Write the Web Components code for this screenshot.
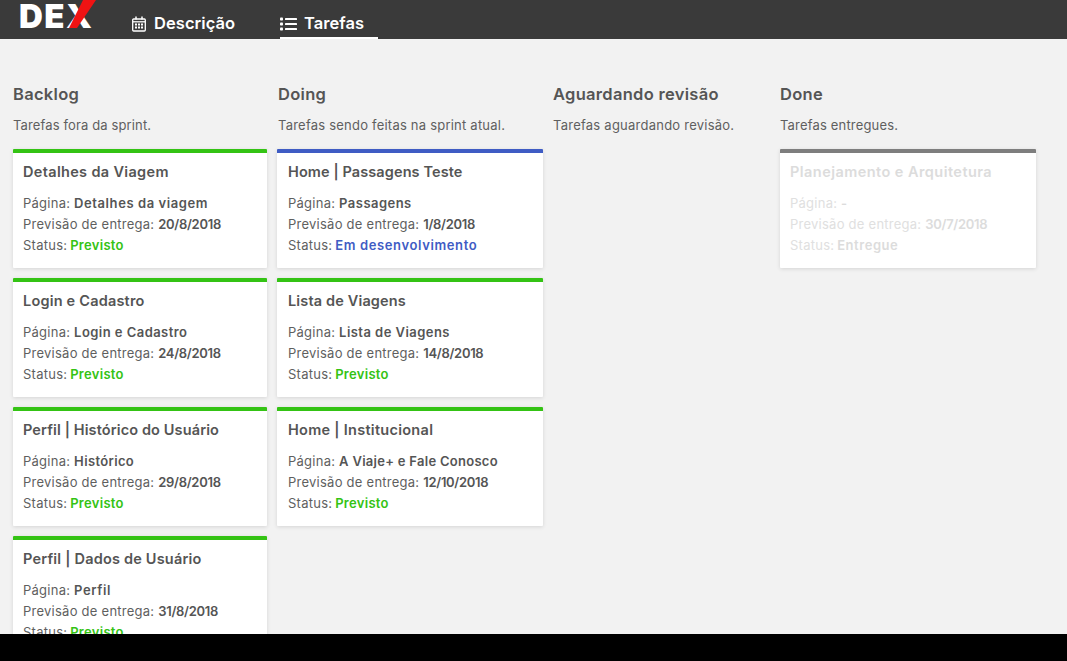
<!DOCTYPE html>
<html lang="pt-BR"><head><meta charset="utf-8"><title>Tarefas</title>
<style>
html,body{margin:0;height:661px;overflow:hidden;background:#000}
body{display:flex;flex-direction:column;font-family:Inter,"Liberation Sans",sans-serif;color:#555}
</style></head><body>
<dex-header>
  <dex-logo></dex-logo>
  <dex-tab icon="calendar" style="--w:124px;--g:8px">Descrição</dex-tab>
  <dex-tab icon="list" active style="--w:98px;--g:7px">Tarefas</dex-tab>
</dex-header>
<dex-board>
  <dex-column heading="Backlog" note="Tarefas fora da sprint." style="--w:254px;--nls:.13px">
    <dex-card title="Detalhes da Viagem" page="Detalhes da viagem" date="20/8/2018" status="Previsto" kind="planned" style="--tls:.33px;--pls:.58px"></dex-card>
    <dex-card title="Login e Cadastro" page="Login e Cadastro" date="24/8/2018" status="Previsto" kind="planned" style="--tls:.2px;--pls:.45px"></dex-card>
    <dex-card title="Perfil | Histórico do Usuário" page="Histórico" date="29/8/2018" status="Previsto" kind="planned" style="--tls:.12px;--pls:.36px"></dex-card>
    <dex-card title="Perfil | Dados de Usuário" page="Perfil" date="31/8/2018" status="Previsto" kind="planned" style="--tls:.2px;--pls:.58px"></dex-card>
  </dex-column>
  <dex-column heading="Doing" note="Tarefas sendo feitas na sprint atual." style="--w:266px;--inset:1px;--nls:.22px">
    <dex-card title="Home | Passagens Teste" page="Passagens" date="1/8/2018" status="Em desenvolvimento" kind="doing" style="--tls:.1px;--pls:.47px;--sls:.63px"></dex-card>
    <dex-card title="Lista de Viagens" page="Lista de Viagens" date="14/8/2018" status="Previsto" kind="planned" style="--tls:.15px;--pls:.45px"></dex-card>
    <dex-card title="Home | Institucional" page="A Viaje+ e Fale Conosco" date="12/10/2018" status="Previsto" kind="planned" style="--tls:.28px;--pls:.28px"></dex-card>
  </dex-column>
  <dex-column heading="Aguardando revisão" note="Tarefas aguardando revisão." style="--w:217px;--nls:.24px"></dex-column>
  <dex-column heading="Done" note="Tarefas entregues." style="--w:256px;--nls:.17px">
    <dex-card title="Planejamento e Arquitetura" page="-" date="30/7/2018" status="Entregue" kind="done" style="--tls:.45px;--sls:.55px"></dex-card>
  </dex-column>
</dex-board>
<dex-footer></dex-footer>
<script>
function def(name, css, html){
  customElements.define(name, class extends HTMLElement{
    connectedCallback(){
      if(this.shadowRoot) return;
      const r=this.attachShadow({mode:'open'});
      r.innerHTML='<style>'+css+'</style>'+(typeof html==='function'?html(this):html);
    }
  });
}
const esc=s=>(s||'').replace(/&/g,'&amp;').replace(/</g,'&lt;');
const ICONS={
 calendar:'<svg width="14" height="16" viewBox="0 0 14 16" fill="none" stroke="#fff"><path stroke-width="1.3" d="M1.6 3h10.8a.9.9 0 0 1 .9.9v10.2a.9.9 0 0 1-.9.9H1.6a.9.9 0 0 1-.9-.9V3.900a.9.9 0 0 1 .9-.9z"/><path stroke-width="1.5" d="M4 .5v3M10 .5v3"/><path stroke-width="1.3" d="M1 5.800h12"/><path stroke-width="1.8" stroke-dasharray="2 1" d="M3 8.500h8M3 11.500h8"/></svg>',
 list:'<svg width="17" height="14" viewBox="0 0 17 14" fill="#fff"><rect x="0" y="0.500" width="3" height="3" rx=".8"/><rect x="0" y="5.500" width="3" height="3" rx=".8"/><rect x="0" y="10.500" width="3" height="3" rx=".8"/><rect x="5" y="1" width="12" height="2" rx=".6"/><rect x="5" y="6" width="12" height="2" rx=".6"/><rect x="5" y="11" width="12" height="2" rx=".6"/></svg>'
};
def('dex-header',':host{display:flex;flex:none;height:39px;background:#3a3a3a;overflow:hidden}','<slot></slot>');
def('dex-logo',`:host{display:block;position:relative;flex:none;width:78px;height:39px;margin:0 35px 0 19px}
 span{display:block;font:900 33px/32px Inter,sans-serif;letter-spacing:1.5px;color:#fff;white-space:nowrap}
 svg{position:absolute;left:0;top:0}`,
 `<span>DEX</span><svg width="78" height="39" viewBox="0 0 78 39"><polygon points="64,0 77,0 58,28 50,28" fill="#f01313"/></svg>`);
def('dex-tab',`:host{display:flex;flex:none;width:var(--w);box-sizing:border-box;height:39px;align-items:center;gap:var(--g);margin-right:24px;padding-top:8px;font:600 16.500px/1 Inter,sans-serif;color:#fff;letter-spacing:.05px}
 :host([active]){box-shadow:inset 0 -2px 0 #fff}
 svg{display:block;flex:none}`,
 h=>ICONS[h.getAttribute('icon')]+'<slot></slot>');
def('dex-board',':host{display:flex;flex:1 1 0;min-height:0;overflow:hidden;gap:10px;background:#f2f2f2;padding:46px 0 0 13px;box-sizing:border-box}','<slot></slot>');
def('dex-column',`:host{display:block;flex:none;width:var(--w)}
 h2{margin:0;padding-left:var(--inset,0);font:600 16.500px/19px Inter,sans-serif;color:#555;letter-spacing:.3px;white-space:nowrap}
 p{margin:12px 0 14px;padding-left:var(--inset,0);font:400 13px/19px Inter,sans-serif;color:#5f5f5f;letter-spacing:var(--nls,.2px);white-space:nowrap}
 div{display:flex;flex-direction:column;gap:10px}`,
 h=>`<h2>${esc(h.getAttribute('heading'))}</h2><p>${esc(h.getAttribute('note'))}</p><div><slot></slot></div>`);
def('dex-card',`:host{display:block;box-sizing:border-box;height:119px;padding:10px 10px 0 calc(10px + var(--inset,0px));background:#fff;border-top:4px solid var(--c);box-shadow:0 1px 4px rgba(0,0,0,.12);border-radius:1px;flex:none;--c:#34c314;--s:#34c314;--t:#5f5f5f;--b:#555}
 :host([kind=doing]){--c:#3f5cc4;--s:#3f5cc4}
 :host([kind=done]){--c:#7e7e7e;--s:#dcdcdc;--t:#e0e0e0;--b:#dcdcdc}
 h3{margin:0 0 12px;font:600 14.500px/18px Inter,sans-serif;color:var(--b);letter-spacing:var(--tls,.2px);white-space:nowrap}
 div{font:400 13px/21px Inter,sans-serif;color:var(--t);letter-spacing:.25px;white-space:nowrap}
 b{font-weight:600;color:var(--b)}
 .p{letter-spacing:var(--pls,.5px)}
 .d{letter-spacing:-.3px}
 .s{color:var(--s);letter-spacing:var(--sls,.3px);margin-left:-1px}`,
 h=>{const a=n=>esc(h.getAttribute(n));return `<h3>${a('title')}</h3><div>Página: <b class="p">${a('page')}</b></div><div>Previsão de entrega: <b class="d">${a('date')}</b></div><div>Status: <b class="s">${a('status')}</b></div>`});
def('dex-footer',':host{display:block;flex:none;height:27px;background:#000}','');
</script>
</body></html>
